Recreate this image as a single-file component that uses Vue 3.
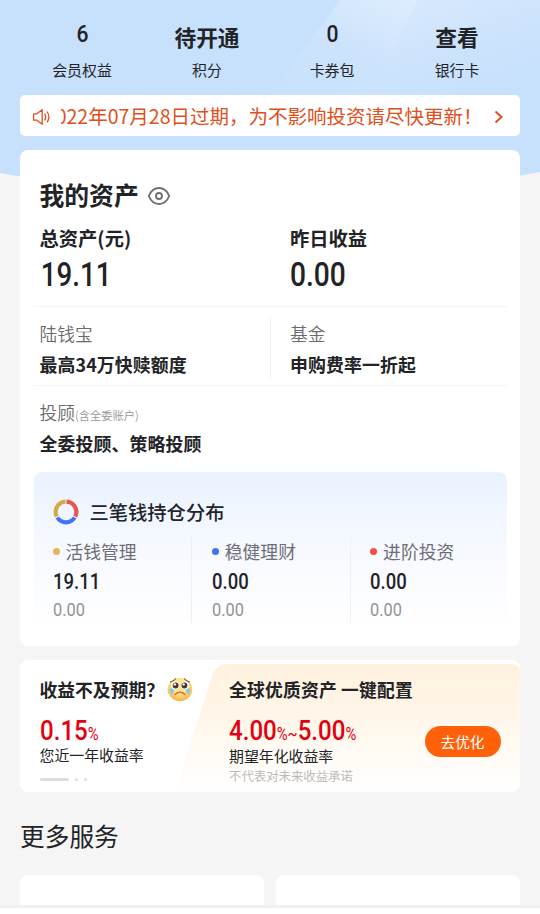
<script setup>
const stats = [
  { value: '6', label: '会员权益', numeric: true },
  { value: '待开通', label: '积分' },
  { value: '0', label: '卡券包', numeric: true },
  { value: '查看', label: '银行卡' },
]
const buckets = [
  { name: '活钱管理', amount: '19.11', change: '0.00', tone: 'gold' },
  { name: '稳健理财', amount: '0.00', change: '0.00', tone: 'blue' },
  { name: '进阶投资', amount: '0.00', change: '0.00', tone: 'red' },
]
</script>

<template>
  <main class="page">
    <svg class="backdrop" viewBox="0 0 540 190" aria-hidden="true">
      <defs>
        <linearGradient id="ray" x1="1" y1="0" x2="0.2" y2="1">
          <stop offset="0" stop-color="#fff" stop-opacity=".42" />
          <stop offset=".5" stop-color="#fff" stop-opacity=".12" />
          <stop offset="1" stop-color="#fff" stop-opacity=".04" />
        </linearGradient>
        <linearGradient id="ray2" x1="0" y1="0" x2="0.6" y2="1">
          <stop offset="0" stop-color="#fff" stop-opacity=".3" />
          <stop offset="1" stop-color="#fff" stop-opacity="0" />
        </linearGradient>
      </defs>
      <path d="M0 0H540V172Q515 177 480 181H60Q25 178 0 173Z" fill="#c7e0fc" />
      <path d="M340 0H418L369 95H270Z" fill="url(#ray)" />
      <path d="M418 0H540V95H369Z" fill="url(#ray2)" />
    </svg>

    <section class="stats">
      <div v-for="s in stats" :key="s.label" class="stat">
        <div class="stat-value" :class="{ num: s.numeric }"><span>{{ s.value }}</span></div>
        <div class="stat-label">{{ s.label }}</div>
      </div>
    </section>

    <section class="notice">
      <svg class="speaker" viewBox="0 0 20 18" fill="none" stroke="#df4f20" stroke-width="1.3" stroke-linejoin="round" stroke-linecap="round">
        <path d="M1.6 5.8H4.8L10.2 1.8V16.2L4.8 12.2H1.6Z" />
        <path d="M12.8 6Q14.5 9 12.8 12M15.3 4Q18.6 9 15.3 14" />
      </svg>
      <div class="ticker"><span>2022年07月28日过期，为不影响投资请尽快更新！</span></div>
      <svg class="chevron" viewBox="0 0 10 14" fill="none" stroke="#df4f20" stroke-width="2"><path d="M1.5 1.5L7.5 7L1.5 12.5" /></svg>
    </section>

    <section class="assets">
      <header class="assets-head">
        <h1>我的资产</h1>
        <svg class="eye" viewBox="0 0 24 20" fill="none" stroke="#6f7073" stroke-width="1.9">
          <path d="M1.8 10C4 4.500 7.500 2 12 2S20 4.500 22.200 10C20 15.500 16.500 18 12 18S4 15.500 1.800 10Z" />
          <circle cx="12" cy="10" r="3" />
        </svg>
      </header>
      <div class="totals">
        <div><h2>总资产(元)</h2><p class="num big first">19.11</p></div>
        <div><h2>昨日收益</h2><p class="num big">0.00</p></div>
      </div>
      <div class="products">
        <div><p class="name">陆钱宝</p><p class="desc">最高34万快赎额度</p></div>
        <div class="ruled"><p class="name">基金</p><p class="desc">申购费率一折起</p></div>
      </div>
      <div class="advisor">
        <p class="name">投顾<small>(含全委账户)</small></p>
        <p class="desc">全委投顾、策略投顾</p>
      </div>
      <div class="holdings">
        <header>
          <svg class="donut" viewBox="0 0 26 26" fill="none" stroke-width="4.200">
            <path d="M13.500 2.700A10.300 10.300 0 0 1 22.200 17.600" stroke="#ed5350" />
            <path d="M21.700 18.500A10.300 10.300 0 0 1 4.300 18.500" stroke="#3f74f6" />
            <path d="M3.800 17.600A10.300 10.300 0 0 1 12.500 2.700" stroke="#d1aa4c" />
          </svg>
          <h3>三笔钱持仓分布</h3>
        </header>
        <div class="buckets">
          <div v-for="b in buckets" :key="b.name" class="bucket">
            <p class="bucket-name"><i :class="b.tone"></i>{{ b.name }}</p>
            <p class="num amount">{{ b.amount }}</p>
            <p class="num change">{{ b.change }}</p>
          </div>
        </div>
      </div>
    </section>

    <section class="promo">
      <svg class="promo-bg" viewBox="0 0 345 128" aria-hidden="true">
        <defs>
          <linearGradient id="cream" x1="0" y1="0" x2="0" y2="1">
            <stop offset="0" stop-color="#fff1de" />
            <stop offset=".4" stop-color="#fff6e9" />
            <stop offset="1" stop-color="#fff" />
          </linearGradient>
        </defs>
        <path d="M0 128L37 12Q41 0 53 0H337Q345 0 345 8V128Z" fill="url(#cream)" />
      </svg>
      <div class="promo-left">
        <h4>收益不及预期？
          <svg class="sad" viewBox="0 0 26 26">
            <defs><radialGradient id="face" cx=".5" cy=".35" r=".7"><stop offset=".4" stop-color="#ffe39a" /><stop offset="1" stop-color="#f2b03c" /></radialGradient></defs>
            <ellipse cx="13" cy="13.500" rx="12.200" ry="11.500" fill="url(#face)" />
            <path d="M3.500 6Q7 5 8.500 2.800M17.500 2.800Q19 5 22.500 6" fill="none" stroke="#7d5424" stroke-width="1.100" stroke-linecap="round" />
            <path d="M3.600 12Q2 16 4.800 18.500Q7.200 17 7 12ZM22.400 12Q24 16 21.200 18.500Q18.800 17 19 12Z" fill="#86cbe4" />
            <circle cx="8" cy="9.500" r="3.900" fill="#fff" /><circle cx="18" cy="9.500" r="3.900" fill="#fff" />
            <circle cx="8.600" cy="9.500" r="2.900" fill="#44382f" /><circle cx="17.400" cy="9.500" r="2.900" fill="#44382f" />
            <circle cx="7.800" cy="8.400" r="1.200" fill="#fff" /><circle cx="16.600" cy="8.400" r="1.200" fill="#fff" />
            <path d="M8 18.500Q13 14 18 18.500" fill="none" stroke="#c97a20" stroke-width="1.500" stroke-linecap="round" />
          </svg>
        </h4>
        <p class="num rate">0.15<small>%</small></p>
        <p class="caption">您近一年收益率</p>
        <div class="pager"><i class="on"></i><i></i><i></i></div>
      </div>
      <div class="promo-right">
        <h4>全球优质资产 一键配置</h4>
        <p class="num rate">4.00<small>%</small><small class="tilde">~</small>5.00<small>%</small></p>
        <p class="caption">期望年化收益率</p>
        <p class="fine">不代表对未来收益承诺</p>
      </div>
      <button>去优化</button>
    </section>

    <h5 class="more">更多服务</h5>
    <section class="services"><div></div><div></div></section>
    <footer></footer>
  </main>
</template>

<style>
body { background: #f5f5f5; }
</style>

<style scoped>
* { box-sizing: border-box; margin: 0; padding: 0; font-style: normal; }
.page {
  position: relative;
  width: 540px;
  height: 914px;
  overflow: hidden;
  background: #f5f5f5;
  color: #222326;
  font-family: "Noto Sans CJK SC", sans-serif;
  white-space: nowrap;
  display: flex;
  flex-direction: column;
}
.backdrop { position: absolute; top: 0; left: 0; width: 540px; height: 190px; }
.num { font-family: Roboto, sans-serif; font-weight: 500; transform-origin: left center; }

.stats { position: relative; display: grid; grid-template-columns: repeat(4, 125px); padding: 21px 20px 0 19.500px; height: 95px; }
.stat { text-align: center; }
.stat-value { height: 32px; line-height: 32px; font-size: 21.700px; font-weight: 700; }
.stat-value.num { font-size: 24px; line-height: 27px; font-weight: 500; transform: scaleX(.88); transform-origin: center; }
.stat-label { height: 34px; line-height: 34px; font-size: 14.900px; }

.notice { position: relative; display: flex; align-items: center; width: 500.500px; height: 41px; margin-left: 19.500px; border-radius: 5px; background: #fff; color: #df4f20; padding-left: 12px; }
.speaker { width: 20px; height: 18px; margin-top: 2px; }
.ticker { width: 422px; margin-left: 9px; overflow: hidden; display: flex; justify-content: flex-end; font-size: 19.500px; line-height: 39px; }
.chevron { width: 10px; height: 14px; margin: 2px 0 0 11px; }

.assets { position: relative; width: 500.500px; height: 496px; margin: 14px 0 0 19.500px; padding: 26px 13px 0 14px; border-radius: 8px; background: #fff; }
.assets-head { display: flex; align-items: center; height: 38px; padding-left: 6px; gap: 8px; }
h1 { font-size: 24.800px; height: 38px; line-height: 36px; font-weight: 700; }
.eye { width: 24px; height: 20px; margin-top: 2px; }
.totals { display: grid; grid-template-columns: 250.500px 1fr; padding-left: 6px; height: 93px; border-bottom: 1px solid #f5f5f5; }
h2 { height: 50px; line-height: 49px; font-size: 19.300px; font-weight: 700; }
.big { font-size: 33.500px; line-height: 36px; margin-top: -7px; transform: scaleX(.84); }
.big.first { padding-left: 1px; transform: scaleX(.825); }
.products { display: grid; grid-template-columns: 236.500px 1fr; padding: 10px 0 0 0; height: 79px; border-bottom: 1px solid #f5f5f5; }
.products > div { padding-left: 6px; height: 62px; }
.products > .ruled { padding-left: 19px; border-left: 1px solid #f1f1f1; }
.name { color: #6a6a6c; font-size: 17.700px; line-height: 32px; height: 32px; font-weight: 350; }
.name small { font-size: 11.300px; color: #96969a; }
.desc { font-size: 17.900px; font-weight: 700; line-height: 30px; letter-spacing: .1px; }
.advisor { padding: 10px 0 0 6px; height: 86px; }
.holdings { height: 156px; border-radius: 8px 8px 0 0; background: linear-gradient(#eaf2fe, #f7f9ff 50%, #fff); }
.holdings header { display: flex; align-items: center; height: 63px; padding: 16px 0 0 19px; }
.donut { width: 26px; height: 26px; margin-right: 11px; }
h3 { font-size: 19.300px; font-weight: 500; line-height: 32px; color: #20242b; }
.buckets { display: grid; grid-template-columns: repeat(3, 158.300px); margin-left: -.5px; }
.bucket { height: 86px; padding-left: 19.500px; margin-top: 2px; }
.bucket + .bucket { border-left: 1px solid #edf0f6; }
.bucket-name { display: flex; align-items: center; height: 28px; font-size: 17.800px; line-height: 28px; color: #6c6e75; }
.bucket-name i { width: 7px; height: 7px; border-radius: 50%; margin-right: 6px; }
.gold { background: #e3b757; }
.blue { background: #3a74f7; }
.red { background: #f64e47; }
.amount { font-size: 22px; line-height: 34px; height: 33px; transform: scaleX(.84); }
.change { font-size: 19px; line-height: 23px; color: #929397; font-weight: 400; transform: scaleX(.86); }

.promo { position: relative; display: flex; width: 500.500px; height: 132px; margin: 14px 0 0 19.500px; padding: 14px 19.500px 0 20px; border-radius: 8px; background: #fff; overflow: hidden; }
.promo-bg { position: absolute; right: 0; top: 4px; width: 345px; height: 128px; }
.promo-left, .promo-right { position: relative; }
.promo-left { width: 189.500px; }
.promo-right { flex: 1; }
h4 { display: flex; align-items: center; height: 30px; line-height: 30px; font-size: 17.800px; font-weight: 700; }
.promo-right h4 { letter-spacing: .2px; }
.sad { width: 26px; height: 26px; margin-left: 3px; }
.rate { height: 36px; padding-top: 10px; line-height: 34px; font-size: 28.500px; color: #e4000f; transform: scaleX(.845); }
.rate small { font-size: 17.500px; font-weight: 400; }
.caption { height: 30px; line-height: 30px; font-size: 14.900px; }
.promo-right .caption { padding-top: 1px; }
.pager { display: flex; gap: 6px; padding-top: 8px; }
.pager i { width: 3px; height: 3px; border-radius: 2px; background: #dedede; }
.pager .on { width: 29px; }
.fine { font-size: 12.400px; line-height: 12px; color: #bbb; }
button { position: relative; width: 76px; height: 31px; margin-top: 52px; border: 0; border-radius: 16px; background: #ff600a; color: #fff; font: 400 14.700px/30px "Noto Sans CJK SC", sans-serif; }

.more { margin: 21px 0 0 20px; height: 47px; line-height: 45px; font-size: 24.700px; font-weight: 400; }
.services { display: grid; grid-template-columns: 244px 244px; gap: 12.500px; margin: 15px 0 0 19.500px; height: 30px; }
.services div { border-radius: 8px 8px 0 0; background: #fff; }
footer { height: 9px; border-top: 3px solid #f0f0f0; background: #fff; }
</style>
